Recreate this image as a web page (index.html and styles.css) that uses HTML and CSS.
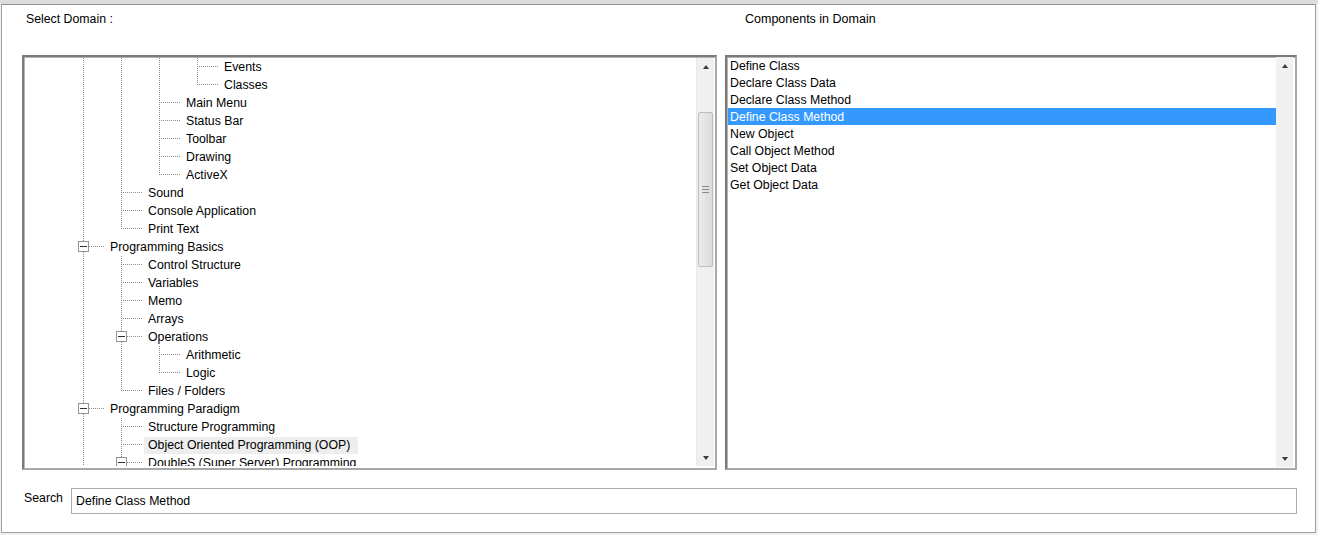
FILE: index.html
```html
<!DOCTYPE html>
<html>
<head>
<meta charset="utf-8">
<link rel="stylesheet" href="styles.css">
</head>
<body>
<div class="topbar"></div>
<div class="window">
  <div class="labels">
    <div class="lab-left">Select Domain :</div>
    <div class="lab-right">Components in Domain</div>
  </div>
  <div class="panels">
    <div class="tree">
      <div class="tree-inner">
        <div class="tree-rows">
          <div class="row"><span class="c v"></span><span class="c v"></span><span class="c v"></span><span class="c t"></span><span class="lbl">Events</span></div>
          <div class="row"><span class="c v"></span><span class="c v"></span><span class="c v"></span><span class="c l"></span><span class="lbl">Classes</span></div>
          <div class="row"><span class="c v"></span><span class="c v"></span><span class="c t"></span><span class="lbl">Main Menu</span></div>
          <div class="row"><span class="c v"></span><span class="c v"></span><span class="c t"></span><span class="lbl">Status Bar</span></div>
          <div class="row"><span class="c v"></span><span class="c v"></span><span class="c t"></span><span class="lbl">Toolbar</span></div>
          <div class="row"><span class="c v"></span><span class="c v"></span><span class="c t"></span><span class="lbl">Drawing</span></div>
          <div class="row"><span class="c v"></span><span class="c v"></span><span class="c l"></span><span class="lbl">ActiveX</span></div>
          <div class="row"><span class="c v"></span><span class="c t"></span><span class="lbl">Sound</span></div>
          <div class="row"><span class="c v"></span><span class="c t"></span><span class="lbl">Console Application</span></div>
          <div class="row"><span class="c v"></span><span class="c l"></span><span class="lbl">Print Text</span></div>
          <div class="row"><span class="c x"><span class="box"></span></span><span class="lbl">Programming Basics</span></div>
          <div class="row"><span class="c v"></span><span class="c t"></span><span class="lbl">Control Structure</span></div>
          <div class="row"><span class="c v"></span><span class="c t"></span><span class="lbl">Variables</span></div>
          <div class="row"><span class="c v"></span><span class="c t"></span><span class="lbl">Memo</span></div>
          <div class="row"><span class="c v"></span><span class="c t"></span><span class="lbl">Arrays</span></div>
          <div class="row"><span class="c v"></span><span class="c x"><span class="box"></span></span><span class="lbl">Operations</span></div>
          <div class="row"><span class="c v"></span><span class="c v"></span><span class="c t"></span><span class="lbl">Arithmetic</span></div>
          <div class="row"><span class="c v"></span><span class="c v"></span><span class="c l"></span><span class="lbl">Logic</span></div>
          <div class="row"><span class="c v"></span><span class="c l"></span><span class="lbl">Files / Folders</span></div>
          <div class="row"><span class="c x"><span class="box"></span></span><span class="lbl">Programming Paradigm</span></div>
          <div class="row"><span class="c v"></span><span class="c t"></span><span class="lbl">Structure Programming</span></div>
          <div class="row"><span class="c v"></span><span class="c t"></span><span class="lbl hot">Object Oriented Programming (OOP)</span></div>
          <div class="row"><span class="c v"></span><span class="c x"><span class="box"></span></span><span class="lbl">DoubleS (Super Server) Programming</span></div>
        </div>
        <div class="sbar">
          <div class="sbtn"><span class="arr-up"></span></div>
          <div class="strack">
            <div class="thumb"><span class="grip"></span></div>
          </div>
          <div class="sbtn"><span class="arr-down"></span></div>
        </div>
      </div>
    </div>
    <div class="list">
      <div class="list-inner">
        <div class="items">
          <div class="item">Define Class</div>
          <div class="item">Declare Class Data</div>
          <div class="item">Declare Class Method</div>
          <div class="item sel">Define Class Method</div>
          <div class="item">New Object</div>
          <div class="item">Call Object Method</div>
          <div class="item">Set Object Data</div>
          <div class="item">Get Object Data</div>
        </div>
        <div class="sbar">
          <div class="sbtn"><span class="arr-up"></span></div>
          <div class="strack"></div>
          <div class="sbtn"><span class="arr-down"></span></div>
        </div>
      </div>
    </div>
  </div>
  <div class="search">
    <div class="search-lab">Search</div>
    <input class="search-input" type="text" value="Define Class Method">
  </div>
</div>
</body>
</html>
```

FILE: styles.css
```css
html, body {
  margin: 0;
  padding: 0;
}
body {
  background: #f0f0f0;
  font-family: "Liberation Sans", Arial, sans-serif;
  font-size: 12.3px;
  color: #000;
  width: 1318px;
  height: 535px;
  overflow: hidden;
}
.topbar {
  height: 4px;
  background: #dcdcdc;
}
.window {
  box-sizing: border-box;
  margin-left: 1px;
  width: 1315px;
  height: 529px;
  border: 1px solid #a0a0a0;
  border-top-color: #8e8e8e;
  background: #fff;
  padding: 7px 18px 0 20px;
  display: flex;
  flex-direction: column;
}
.labels {
  display: grid;
  grid-template-columns: 695px 572px;
  column-gap: 8px;
  height: 14px;
  line-height: 14px;
}
.lab-left { padding-left: 4px; }
.lab-right { padding-left: 20px; font-size: 12.5px; }

.panels {
  margin-top: 29px;
  display: grid;
  grid-template-columns: 695px 572px;
  column-gap: 8px;
  height: 415px;
}
.tree, .list {
  box-sizing: border-box;
  height: 415px;
  border: 2px solid;
  border-color: #7a7a7a #a8a8a8 #a8a8a8 #7a7a7a;
  box-shadow: inset 1px 1px 0 #b4b4b4;
  background: #fff;
}
.tree-inner {
  box-sizing: border-box;
  height: 100%;
  padding: 1px 1px 2px 1px;
  display: flex;
}
.tree-rows {
  flex: 1;
  overflow: hidden;
}
.row {
  display: flex;
  height: 18px;
  line-height: 18px;
  padding-left: 45px;
  white-space: nowrap;
}
.c {
  position: relative;
  flex: 0 0 38px;
  width: 38px;
  height: 18px;
}
.v::before, .t::before, .l::before, .x::before {
  content: "";
  position: absolute;
  left: 13px;
  top: 0;
  width: 1px;
  height: 18px;
  background: repeating-linear-gradient(to bottom, #8c8c8c 0 1px, transparent 1px 2px);
}
.l::before { height: 9px; }
.t::after, .l::after {
  content: "";
  position: absolute;
  left: 15px;
  top: 8px;
  width: 20px;
  height: 1px;
  background: repeating-linear-gradient(to right, #8c8c8c 0 1px, transparent 1px 2px);
}
.x::after {
  content: "";
  position: absolute;
  left: 19px;
  top: 8px;
  width: 16px;
  height: 1px;
  background: repeating-linear-gradient(to right, #8c8c8c 0 1px, transparent 1px 2px);
}
.box {
  position: absolute;
  left: 8px;
  top: 3px;
  box-sizing: border-box;
  width: 11px;
  height: 11px;
  border: 1px solid #949494;
  background: #fff;
}
.box::after {
  content: "";
  position: absolute;
  left: 1px;
  top: 4px;
  width: 7px;
  height: 1px;
  background: #333;
}
.lbl {
  padding-left: 2px;
}
.lbl.hot {
  margin-left: -2px;
  padding: 0 8px 0 4px;
  background: #ededed;
  height: 17px;
  line-height: 17px;
  margin-top: 1px;
}

.sbar {
  flex: 0 0 17px;
  width: 17px;
  display: flex;
  flex-direction: column;
  background: #f0f0f0;
  border-left: 1px solid #e8e8e8;
}
.sbtn {
  height: 17px;
  flex: 0 0 17px;
  display: flex;
  align-items: center;
  justify-content: center;
}
.strack {
  flex: 1;
  padding: 37px 1px 0 1px;
}
.arr-up, .arr-down {
  width: 0;
  height: 0;
  border-left: 3.5px solid transparent;
  border-right: 3.5px solid transparent;
}
.arr-up { border-bottom: 4px solid #3a3a3a; }
.arr-down { border-top: 4px solid #3a3a3a; }
.thumb {
  box-sizing: border-box;
  height: 155px;
  border: 1px solid #bdbdbd;
  border-radius: 2px;
  background: linear-gradient(to right, #ececec, #dcdcdc);
  display: flex;
  align-items: center;
  justify-content: center;
}
.grip {
  width: 7px;
  height: 5px;
  border-top: 1px solid #8a8a8a;
  border-bottom: 1px solid #8a8a8a;
  background: linear-gradient(#8a8a8a, #8a8a8a) center / 7px 1px no-repeat;
}

.list-inner {
  box-sizing: border-box;
  height: 100%;
  padding: 0 2px 1px 1px;
  display: flex;
}
.items {
  flex: 1;
  overflow: hidden;
}
.item {
  box-sizing: border-box;
  height: 17px;
  line-height: 17px;
  padding: 1px 0 0 2px;
  white-space: nowrap;
  overflow: visible;
}
.item.sel {
  background: #3399ff;
  color: #fff;
}
.list .sbar { border-left: none; }

.search {
  margin-top: 18px;
  display: flex;
  align-items: flex-start;
}
.search-lab {
  box-sizing: border-box;
  width: 49px;
  padding-left: 2px;
  margin-top: 3px;
  line-height: 14px;
}
.search-input {
  box-sizing: border-box;
  width: 1226px;
  height: 26px;
  margin: 0;
  border: 1px solid #ababab;
  padding: 0 0 0 4px;
  font-family: "Liberation Sans", Arial, sans-serif;
  font-size: 12.3px;
  color: #000;
  background: #fff;
  outline: none;
}
```
